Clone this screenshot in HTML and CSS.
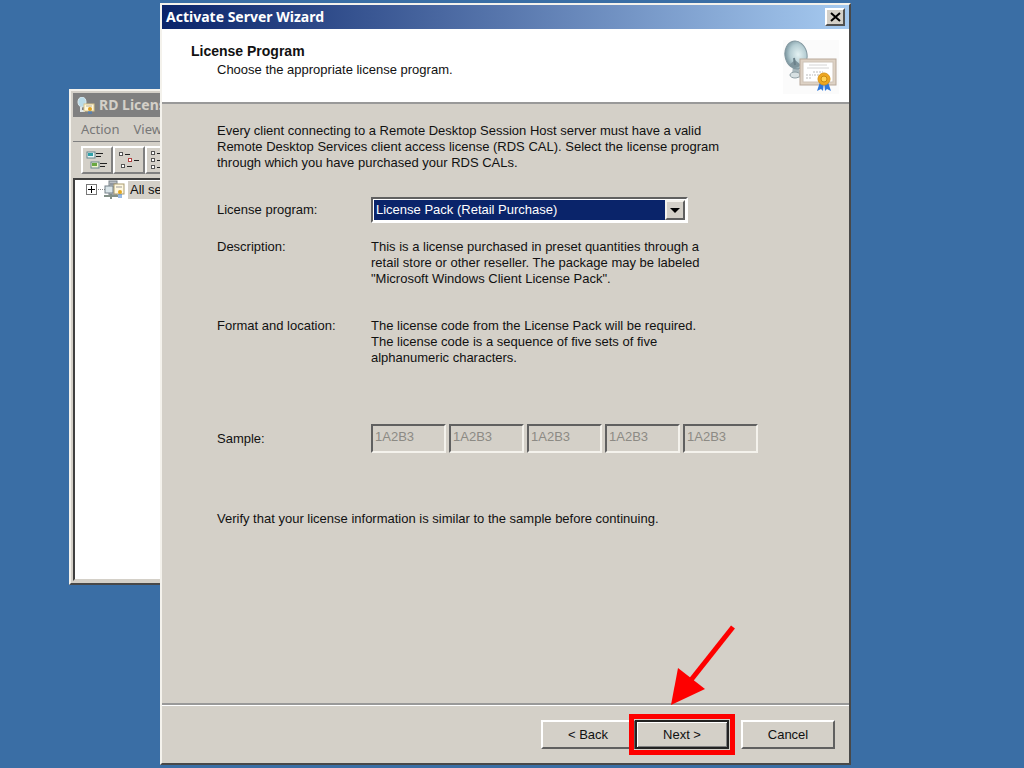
FILE: index.html
```html
<!DOCTYPE html>
<html lang="en">
<head>
  <meta charset="utf-8">
  <title>Activate Server Wizard</title>
  <link rel="stylesheet" href="styles.css">
</head>
<body>

  <div class="window manager">
    <div class="title-bar inactive">
      <svg width="18" height="17" viewBox="0 0 18 17">
        <ellipse cx="5" cy="5" rx="4" ry="5" fill="#b9dbe8" stroke="#dcebf0"/>
        <path d="M4 10v4h4" fill="none" stroke="#dfe6e8" stroke-width="2"/>
        <rect x="7" y="7" width="10" height="7" fill="#fff8dc" stroke="#d8c48c"/>
        <path d="M9 9h6" stroke="#b8b09a"/>
        <circle cx="13" cy="12" r="2" fill="#e0a020"/>
        <path d="M12 14v3M14 14v3" stroke="#3b7ed0"/>
      </svg>
      <span>RD Licensing</span>
    </div>
    <div class="menu-bar">
      <span>Action</span>
      <span>View</span>
    </div>
    <div class="tool-bar">
      <button type="button" aria-label="Large icons">
        <svg width="22" height="20" viewBox="0 0 22 20">
          <rect x="1" y="2" width="8" height="6" fill="#e8f4f4" stroke="#69868c"/>
          <rect x="2" y="3" width="5" height="3" fill="#2fa0a8"/>
          <rect x="5" y="12" width="8" height="6" fill="#f0f4d0" stroke="#69868c"/>
          <rect x="6" y="13" width="5" height="3" fill="#69a840"/>
          <path d="M10 3.5h7M10 6.5h5M14 13.5h7M14 16.5h5" stroke="#222"/>
        </svg>
      </button>
      <button type="button" aria-label="Small icons">
        <svg width="22" height="20" viewBox="0 0 22 20">
          <g fill="#fff" stroke="#555">
            <rect x="1.5" y="2.5" width="3" height="3"/>
            <rect x="10.5" y="8.5" width="3" height="3" stroke="#b04040"/>
            <rect x="3.5" y="14.5" width="3" height="3"/>
          </g>
          <path d="M7 4.5h5M16 10.5h5M9 16.5h5" stroke="#222"/>
        </svg>
      </button>
      <button type="button" aria-label="List">
        <svg width="22" height="20" viewBox="0 0 22 20">
          <g fill="#fff" stroke="#555">
            <rect x="1.5" y="1.5" width="3" height="3"/>
            <rect x="1.5" y="8.5" width="3" height="3"/>
            <rect x="1.5" y="15.5" width="3" height="3"/>
          </g>
          <path d="M7 3.5h5M7 10.5h5M7 17.5h5" stroke="#222"/>
        </svg>
      </button>
    </div>
    <div class="tree">
      <div class="tree-item">
        <svg width="40" height="20" viewBox="0 0 40 20">
          <rect x="1.5" y="4.5" width="10" height="10" fill="#fff" stroke="#777"/>
          <path d="M3 9.5h7M6.5 6v7" stroke="#000"/>
          <path d="M13 9.5h7" stroke="#888" stroke-dasharray="1 1"/>
          <rect x="24" y="1" width="8" height="14" fill="#b9bec4" stroke="#7d858c"/>
          <path d="M25 4h6M25 7h6" stroke="#68727c"/>
          <rect x="20" y="6" width="8" height="7" fill="#d9e4e8" stroke="#758088"/>
          <rect x="29" y="4" width="10" height="10" fill="#fff8e0" stroke="#a99b70"/>
          <path d="M31 7h6" stroke="#999"/>
          <circle cx="35" cy="12" r="2" fill="#e3a81f"/>
          <path d="M34 14v4M36 14v4" stroke="#2e72c8"/>
          <path d="M19 16h14M26 14v5" stroke="#839088" stroke-width="2"/>
        </svg>
        <span class="tree-label">All servers</span>
      </div>
    </div>
  </div>

  <form class="window wizard">
    <div class="title-bar">
      <span>Activate Server Wizard</span>
      <button type="button" class="close" aria-label="Close">
        <svg width="11" height="10" viewBox="0 0 11 10">
          <path d="M1 1l9 8M10 1l-9 8" stroke="#000" stroke-width="2"/>
        </svg>
      </button>
    </div>

    <div class="header">
      <div>
        <h1>License Program</h1>
        <p>Choose the appropriate license program.</p>
      </div>
      <svg width="56" height="54" viewBox="0 0 56 54">
        <defs>
          <radialGradient id="dish" cx="60%" cy="50%" r="60%">
            <stop offset="0" stop-color="#e4f2f3"/>
            <stop offset="0.6" stop-color="#b5cdd3"/>
            <stop offset="1" stop-color="#78939d"/>
          </radialGradient>
        </defs>
        <rect width="56" height="54" fill="#fbfbfb"/>
        <path d="M10 26l-1 8q3 5 10 3l-3-9z" fill="#aab9be"/>
        <ellipse cx="12" cy="35" rx="5" ry="3" fill="#d7e0e2" stroke="#8e9ea4"/>
        <ellipse cx="13" cy="15" rx="11" ry="14" fill="url(#dish)" stroke="#82979f" transform="rotate(-12 13 15)"/>
        <path d="M6 25q6 6 12 0l-6-5z" fill="#7f959d"/>
        <path d="M11 18l1 7" stroke="#6b818a" stroke-width="2"/>
        <rect x="17" y="19" width="36" height="26" fill="#ded2c5" stroke="#b9aa9b"/>
        <rect x="20" y="22" width="30" height="20" fill="#fff" stroke="#cec3b8"/>
        <path d="M26 25h18M24 28h22" stroke="#d4d4d4"/>
        <path d="M30 32h10M23 35h7M31 35h7M23 38h6" stroke="#bbb" stroke-dasharray="2 1"/>
        <path d="M37 42l-3 9 4-2 2 2 1-9zM41 42l1 9 2-2 4 2-3-9z" fill="#2f78dc"/>
        <circle cx="41" cy="39" r="6" fill="#eea620" stroke="#d9961a" stroke-width="1"/>
        <circle cx="41" cy="39" r="3" fill="#ffd154" stroke="#c98a10"/>
      </svg>
    </div>

    <div class="content">
      <p class="intro">
        Every client connecting to a Remote Desktop Session Host server must have a valid<br>
        Remote Desktop Services client access license (RDS CAL). Select the license program<br>
        through which you have purchased your RDS CALs.
      </p>

      <div class="row program">
        <label for="program">License program:</label>
        <div class="combo">
          <select id="program">
            <option>License Pack (Retail Purchase)</option>
          </select>
          <span class="combo-arrow">
            <svg width="10" height="5" viewBox="0 0 10 5"><path d="M0 0h10l-5 5z"/></svg>
          </span>
        </div>
      </div>

      <div class="row description">
        <span>Description:</span>
        <p>
          This is a license purchased in preset quantities through a<br>
          retail store or other reseller. The package may be labeled<br>
          "Microsoft Windows Client License Pack".
        </p>
      </div>

      <div class="row format">
        <span>Format and location:</span>
        <p>
          The license code from the License Pack will be required.<br>
          The license code is a sequence of five sets of five<br>
          alphanumeric characters.
        </p>
      </div>

      <div class="row sample">
        <label for="sample1">Sample:</label>
        <div class="codes">
          <input type="text" id="sample1" value="1A2B3" disabled>
          <input type="text" aria-label="Sample part 2" value="1A2B3" disabled>
          <input type="text" aria-label="Sample part 3" value="1A2B3" disabled>
          <input type="text" aria-label="Sample part 4" value="1A2B3" disabled>
          <input type="text" aria-label="Sample part 5" value="1A2B3" disabled>
        </div>
      </div>

      <p>Verify that your license information is similar to the sample before continuing.</p>
    </div>

    <div class="footer">
      <button type="button" class="btn">&lt; Back</button>
      <div class="next">
        <button type="submit" class="btn default">Next &gt;</button>
        <div class="highlight"></div>
        <svg class="arrow" width="64" height="80" viewBox="0 0 64 80">
          <path d="M62 2L20 55" stroke="#fe0000" stroke-width="5"/>
          <path d="M0 80L7 43l27 21z" fill="#fe0000"/>
        </svg>
      </div>
      <button type="button" class="btn cancel">Cancel</button>
    </div>
  </form>

</body>
</html>
```

FILE: styles.css
```css
* {
  box-sizing: border-box;
}

body {
  margin: 0;
  height: 100vh;
  overflow: hidden;
  background-color: #3a6ea5;
  font-family: "Liberation Sans", Arial, sans-serif;
  font-size: 13px;
  line-height: 16px;
  color: #111;
}

h1,
p {
  margin: 0;
}

svg {
  display: block;
  flex: none;
}

button,
input,
select {
  font: inherit;
  color: inherit;
}

.window {
  position: absolute;
  display: flex;
  flex-direction: column;
  background-color: #d4d0c8;
  border: 2px solid;
  border-color: #f4f2ec #484848 #484848 #f4f2ec;
}

.title-bar {
  display: flex;
  align-items: center;
  justify-content: space-between;
  height: 24px;
  padding: 0 4px;
  background: linear-gradient(to right, #0a246a, #a6caf0);
  color: #fff;
  font-family: "Noto Sans", Tahoma, sans-serif;
  font-size: 14px;
  font-weight: bold;
}

/* licensing manager, behind the wizard */

.manager {
  top: 89px;
  left: 69px;
  bottom: 183px;
  width: 400px;
  padding: 2px;
  white-space: nowrap;
}

.title-bar.inactive {
  justify-content: flex-start;
  gap: 4px;
  background: #808080;
  color: #d4d0c8;
}

.menu-bar {
  display: flex;
  gap: 14px;
  padding: 4px 8px;
  border-bottom: 1px solid #808080;
  color: #777;
  font-family: "Noto Sans", Tahoma, sans-serif;
}

.tool-bar {
  display: flex;
  padding: 4px 8px;
}

.tool-bar button {
  width: 32px;
  height: 28px;
  padding: 2px 3px;
  background-color: #d4d0c8;
  border: 2px solid;
  border-color: #fff #808080 #808080 #fff;
}

.tree {
  flex: 1;
  padding-left: 10px;
  background-color: #fff;
  border: 2px solid #404040;
  border-bottom-color: #d4d0c8;
}

.tree-item {
  display: flex;
  align-items: center;
  gap: 3px;
}

.tree-label {
  padding: 1px 2px;
  background-color: #d4d0c8;
}

/* wizard */

.wizard {
  top: 3px;
  right: 173px;
  bottom: 3px;
  left: 160px;
}

.close {
  display: flex;
  align-items: center;
  justify-content: center;
  width: 20px;
  height: 18px;
  padding: 0;
  background-color: #d4d0c8;
  border: 2px solid;
  border-color: #fff #505050 #505050 #fff;
}

.header {
  display: flex;
  justify-content: space-between;
  height: 75px;
  padding: 11px 10px 0 29px;
  background-color: #fff;
  border-bottom: 2px solid #999;
}

.header h1 {
  padding-top: 3px;
  font-size: 14px;
  line-height: 16px;
}

.header p {
  padding: 3px 0 0 26px;
}

.content {
  flex: 1;
  padding: 19px 20px 0 55px;
}

.row {
  display: grid;
  grid-template-columns: 154px 1fr;
}

.program {
  align-items: center;
  margin-top: 26px;
}

.combo {
  display: flex;
  width: 317px;
  height: 26px;
  padding: 1px;
  background-color: #fff;
  border: 2px solid;
  border-color: #606060 #fff #fff #606060;
}

.combo select {
  flex: 1;
  appearance: none;
  margin: 0;
  padding: 0 2px;
  background-color: #0a246a;
  border: none;
  border-radius: 0;
  color: #fff;
}

.combo-arrow {
  display: flex;
  align-items: center;
  justify-content: center;
  width: 20px;
  background-color: #d4d0c8;
  border: 2px solid;
  border-color: #f4f2ec #606060 #606060 #f4f2ec;
  pointer-events: none;
}

.description {
  margin-top: 16px;
}

.format {
  margin-top: 31px;
}

.sample {
  align-items: center;
  margin: 58px 0;
}

.codes {
  display: flex;
  gap: 3px;
}

.codes input {
  width: 75px;
  height: 29px;
  padding: 0 2px 4px;
  background-color: #d4d0c8;
  border: 2px solid;
  border-color: #606060 #f4f2ec #f4f2ec #606060;
  color: #8c8a84;
}

.footer {
  display: flex;
  justify-content: flex-end;
  padding: 15px 14px 14px;
  border-top: 2px solid #999;
  box-shadow: inset 0 1px #fff;
}

.btn {
  display: block;
  width: 94px;
  height: 29px;
  padding: 0;
  background-color: #d4d0c8;
  border: 2px solid;
  border-color: #fff #606060 #606060 #fff;
}

.btn.default {
  border-color: #222;
  box-shadow: inset 1px 1px #fff, inset -1px -1px #808080;
}

.btn.cancel {
  margin-left: 12px;
}

.next {
  position: relative;
}

/* red frame and arrow drawn over the Next button */

.highlight {
  position: absolute;
  inset: -6px;
  border: 5px solid #fe0000;
  pointer-events: none;
}

.arrow {
  position: absolute;
  left: 36px;
  bottom: 44px;
  pointer-events: none;
}
```
